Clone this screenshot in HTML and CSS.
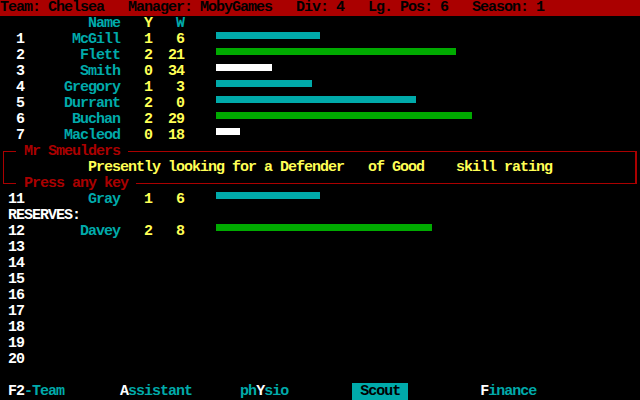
FILE: index.html
```html
<!DOCTYPE html>
<html>
<head>
<meta charset="utf-8">
<link rel="stylesheet" href="styles.css">
</head>
<body>
<div class="screen">
  <div class="row hdr">Team: Chelsea   Manager: MobyGames   Div: 4   Lg. Pos: 6   Season: 1</div>
  <div class="row"><span class="c">           Name</span>   <span class="y">Y</span>   <span class="c">W</span></div>
  <div class="row"><span class="w">  1</span><span class="c">      McGill</span>   <span class="y">1   6</span>    <span class="bar bc" style="width:104px"></span></div>
  <div class="row"><span class="w">  2</span><span class="c">       Flett</span>   <span class="y">2  21</span>    <span class="bar bg" style="width:240px"></span></div>
  <div class="row"><span class="w">  3</span><span class="c">       Smith</span>   <span class="y">0  34</span>    <span class="bar bw" style="width:56px"></span></div>
  <div class="row"><span class="w">  4</span><span class="c">     Gregory</span>   <span class="y">1   3</span>    <span class="bar bc" style="width:96px"></span></div>
  <div class="row"><span class="w">  5</span><span class="c">     Durrant</span>   <span class="y">2   0</span>    <span class="bar bc" style="width:200px"></span></div>
  <div class="row"><span class="w">  6</span><span class="c">      Buchan</span>   <span class="y">2  29</span>    <span class="bar bg" style="width:256px"></span></div>
  <div class="row"><span class="w">  7</span><span class="c">     Macleod</span>   <span class="y">0  18</span>    <span class="bar bw" style="width:24px"></span></div>
  <div class="box">
    <div class="row">  <span class="legend"> Mr Smeulders </span></div>
    <div class="row"><span class="y">           Presently looking for a Defender   of Good    skill rating</span></div>
    <div class="row">  <span class="legend"> Press any key </span></div>
  </div>
  <div class="row"><span class="w"> 11</span><span class="c">        Gray</span>   <span class="y">1   6</span>    <span class="bar bc" style="width:104px"></span></div>
  <div class="row w"> RESERVES:</div>
  <div class="row"><span class="w"> 12</span><span class="c">       Davey</span>   <span class="y">2   8</span>    <span class="bar bg" style="width:216px"></span></div>
  <div class="row w"> 13</div>
  <div class="row w"> 14</div>
  <div class="row w"> 15</div>
  <div class="row w"> 16</div>
  <div class="row w"> 17</div>
  <div class="row w"> 18</div>
  <div class="row w"> 19</div>
  <div class="row w"> 20</div>
  <div class="row"> </div>
  <div class="row menu"> <span class="w">F2</span><span class="c">-Team</span>       <span class="w">A</span><span class="c">ssistant</span>      <span class="c">ph</span><span class="w">Y</span><span class="c">sio</span>        <span class="sel"> Scout </span>         <span class="w">F</span><span class="c">inance</span></div>
</div>
</body>
</html>
```
FILE: styles.css
```css
html, body {
  margin: 0;
  padding: 0;
  background: #000;
}
.screen {
  width: 640px;
  height: 400px;
  overflow: hidden;
  background: #000;
  font-family: "Liberation Mono", "DejaVu Sans Mono", monospace;
  font-size: 15px;
  letter-spacing: -1px;
  font-weight: bold;
  color: #aaaaaa;
}
.row {
  height: 16px;
  line-height: 16px;
  white-space: pre;
  position: relative;
  z-index: 1;
}
.hdr {
  background: #aa0000;
  color: #000;
}
.c { color: #00aaaa; }
.y { color: #ffff55; }
.w { color: #ffffff; }
.bar {
  display: inline-block;
  height: 7px;
  vertical-align: top;
}
.bc { background: #00aaaa; }
.bg { background: #00aa00; }
.bw { background: #ffffff; }
.box {
  position: relative;
}
.box::before {
  content: "";
  position: absolute;
  left: 3px;
  top: 7px;
  width: 631px;
  height: 31px;
  border: 1px solid #aa0000;
  border-right-width: 2px;
  z-index: 0;
}
.legend {
  display: inline-block;
  height: 16px;
  vertical-align: top;
  background: #000;
  color: #aa0000;
}
.sel {
  background: #00aaaa;
  color: #000;
}
```
